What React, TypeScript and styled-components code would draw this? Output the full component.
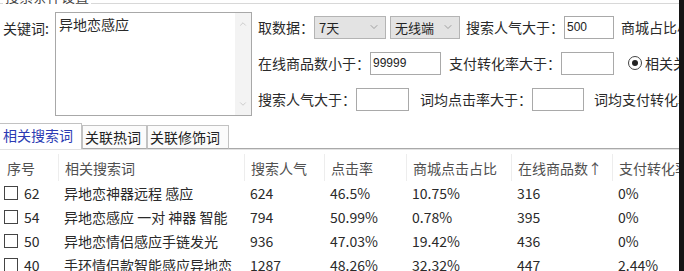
import React from 'react'
import styled, { createGlobalStyle } from 'styled-components'
import { ChevronDown, ChevronUp } from 'lucide-react'

const GlobalStyle = createGlobalStyle`
  body {
    margin: 0;
    background: #fff;
  }
`

const Screen = styled.div`
  width: 684px;
  height: 271px;
  display: flex;
  overflow: hidden;
  background: #fff;
  font-family: "Noto Sans CJK SC", "Noto Sans", sans-serif;
  font-size: 14px;
  color: #2a2a2a;
`

const Window = styled.div`
  flex: 1;
  min-width: 0;
  overflow: hidden;
`

const DarkEdge = styled.div`
  flex: 0 0 5px;
  background: #141414;
`

const GroupBox = styled.div`
  position: relative;
  margin-top: 3px;
  border-top: 1px solid #d8d8d8;
`

const GroupTitle = styled.span`
  position: absolute;
  left: 3px;
  top: -17px;
  padding: 0 2px;
  line-height: 18px;
  background: #fff;
  color: #444;
`

const GroupBody = styled.div`
  display: flex;
  align-items: flex-start;
  padding-top: 8px;
`

const KeywordLabel = styled.span`
  flex: 0 0 55px;
  box-sizing: border-box;
  padding-left: 3px;
  margin-top: 6px;
  line-height: 20px;
`

const KeywordBox = styled.div`
  flex: 0 0 197px;
  height: 104px;
  box-sizing: border-box;
  border: 1px solid #a8a8a8;
  display: flex;
`

const KeywordText = styled.div`
  flex: 1;
  padding: 2px 3px;
  line-height: 18px;
`

const ScrollTrack = styled.div`
  width: 16px;
  background: #f3f3f3;
  display: flex;
  flex-direction: column;
  justify-content: space-between;
  align-items: center;
  padding: 6px 0;
  color: #b4b4b4;
`

const FilterPanel = styled.div`
  flex: 1;
  min-width: 0;
  overflow: hidden;
  margin-left: 6px;
  padding-top: 3px;
  display: flex;
  flex-direction: column;
  gap: 12px;
`

const FilterRow = styled.div`
  display: flex;
  align-items: center;
  height: 24px;
  white-space: nowrap;
`

const Label = styled.span<{ $w?: number; $ml?: number }>`
  flex: 0 0 ${p => (p.$w ? `${p.$w}px` : 'auto')};
  margin-left: ${p => p.$ml ?? 0}px;
  line-height: 20px;
`

const TextInput = styled.div<{ $w: number; $ml?: number }>`
  flex: 0 0 ${p => p.$w}px;
  margin-left: ${p => p.$ml ?? 0}px;
  height: 23px;
  box-sizing: border-box;
  border: 1px solid #a9a9a9;
  background: #fff;
  padding-left: 2px;
  font-family: "Liberation Sans", sans-serif;
  font-size: 12px;
  line-height: 21px;
  color: #222;
`

const Select = styled.div<{ $w: number; $ml?: number }>`
  flex: 0 0 ${p => p.$w}px;
  margin-left: ${p => p.$ml ?? 0}px;
  height: 23px;
  box-sizing: border-box;
  border: 1px solid #b4b4b4;
  background: #e3e3e3;
  display: flex;
  align-items: center;
  justify-content: space-between;
  padding: 0 5px 0 4px;
  font-size: 13px;
  color: #222;

  svg {
    color: #888;
  }
`

const Radio = styled.span<{ $ml?: number }>`
  flex: 0 0 14px;
  margin-left: ${p => p.$ml ?? 0}px;
  margin-right: 3px;
  height: 14px;
  box-sizing: border-box;
  border: 1px solid #444;
  border-radius: 50%;
  display: flex;
  align-items: center;
  justify-content: center;

  &::after {
    content: '';
    width: 6px;
    height: 6px;
    border-radius: 50%;
    background: #222;
  }
`

const TabStrip = styled.div`
  margin-top: 7px;
  height: 26px;
  display: flex;
  align-items: flex-end;
`

const Tab = styled.div<{ $active?: boolean; $w: number }>`
  flex: 0 0 ${p => p.$w}px;
  box-sizing: border-box;
  height: ${p => (p.$active ? 26 : 24)}px;
  border: 1px solid #c2c2c2;
  border-left: ${p => (p.$active ? 'none' : '1px solid #c2c2c2')};
  border-bottom: ${p => (p.$active ? 'none' : '1px solid #a9a9a9')};
  background: ${p => (p.$active ? '#fff' : '#fbfbfb')};
  color: ${p => (p.$active ? '#2b3bb3' : '#222')};
  padding-left: ${p => (p.$active ? 3 : 2)}px;
  line-height: 22px;
  white-space: nowrap;
`

const TabFiller = styled.div`
  flex: 1;
  border-bottom: 1px solid #a9a9a9;
`

const columns = '58px 186px 80px 82px 105px 101px 1fr'

const HeaderRow = styled.div`
  display: grid;
  grid-template-columns: ${columns};
  height: 32px;
  box-sizing: border-box;
  padding-top: 4px;
  border-top: 1px solid #e2e2e2;
`

const HeaderCell = styled.div<{ $first?: boolean }>`
  display: flex;
  align-items: center;
  padding-left: ${p => (p.$first ? 7 : 6)}px;
  border-left: ${p => (p.$first ? 'none' : '1px solid #ededed')};
  color: #505050;
  white-space: nowrap;
  overflow: hidden;
`

const DataRow = styled.div`
  display: grid;
  grid-template-columns: ${columns};
  height: 24px;
`

const DataCell = styled.div`
  display: flex;
  align-items: center;
  padding-left: 6px;
  white-space: nowrap;
  overflow: hidden;
`

const IndexCell = styled.div`
  display: flex;
  align-items: center;
  padding-left: 4px;
  gap: 6px;
`

const CheckBox = styled.span`
  width: 14px;
  height: 14px;
  box-sizing: border-box;
  border: 1px solid #444;
  background: #fff;
`

const headers = ['序号', '相关搜索词', '搜索人气', '点击率', '商城点击占比', '在线商品数↑', '支付转化率']

const rows = [
  { id: 62, kw: '异地恋神器远程 感应', pv: '624', ctr: '46.5%', mall: '10.75%', goods: '316', pay: '0%' },
  { id: 54, kw: '异地恋感应 一对 神器 智能', pv: '794', ctr: '50.99%', mall: '0.78%', goods: '395', pay: '0%' },
  { id: 50, kw: '异地恋情侣感应手链发光', pv: '936', ctr: '47.03%', mall: '19.42%', goods: '436', pay: '0%' },
  { id: 40, kw: '手环情侣款智能感应异地恋', pv: '1287', ctr: '48.26%', mall: '32.32%', goods: '447', pay: '2.44%' },
]

export default function App() {
  return (
    <Screen>
      <GlobalStyle />
      <Window>
        <GroupBox>
          <GroupTitle>搜索条件设置</GroupTitle>
          <GroupBody>
            <KeywordLabel>关键词:</KeywordLabel>
            <KeywordBox>
              <KeywordText>异地恋感应</KeywordText>
              <ScrollTrack>
                <ChevronUp size={10} strokeWidth={1.5} />
                <ChevronDown size={10} strokeWidth={1.5} />
              </ScrollTrack>
            </KeywordBox>
            <FilterPanel>
              <FilterRow>
                <Label $w={54}>取数据：</Label>
                <Select $w={72}>
                  7天
                  <ChevronDown size={12} strokeWidth={1.5} />
                </Select>
                <Select $w={70} $ml={4}>
                  无线端
                  <ChevronDown size={12} strokeWidth={1.5} />
                </Select>
                <Label $w={96} $ml={6}>搜索人气大于：</Label>
                <TextInput $w={50}>500</TextInput>
                <Label $ml={7}>商城占比小于：</Label>
              </FilterRow>
              <FilterRow>
                <Label $w={110}>在线商品数小于：</Label>
                <TextInput $w={71}>99999</TextInput>
                <Label $w={111} $ml={8}>支付转化率大于：</Label>
                <TextInput $w={53} />
                <Radio $ml={14} />
                <Label>相关关键词</Label>
              </FilterRow>
              <FilterRow>
                <Label $w={97}>搜索人气大于：</Label>
                <TextInput $w={53} />
                <Label $w={112} $ml={11}>词均点击率大于：</Label>
                <TextInput $w={52} />
                <Label $ml={10}>词均支付转化率大于：</Label>
              </FilterRow>
            </FilterPanel>
          </GroupBody>
        </GroupBox>

        <TabStrip>
          <Tab $active $w={82}>相关搜索词</Tab>
          <Tab $w={65}>关联热词</Tab>
          <Tab $w={82}>关联修饰词</Tab>
          <TabFiller />
        </TabStrip>

        <HeaderRow>
          {headers.map((h, i) => (
            <HeaderCell key={h} $first={i === 0}>{h}</HeaderCell>
          ))}
        </HeaderRow>
        {rows.map(r => (
          <DataRow key={r.id}>
            <IndexCell>
              <CheckBox />
              {r.id}
            </IndexCell>
            <DataCell>{r.kw}</DataCell>
            <DataCell>{r.pv}</DataCell>
            <DataCell>{r.ctr}</DataCell>
            <DataCell>{r.mall}</DataCell>
            <DataCell>{r.goods}</DataCell>
            <DataCell>{r.pay}</DataCell>
          </DataRow>
        ))}
      </Window>
      <DarkEdge />
    </Screen>
  )
}
